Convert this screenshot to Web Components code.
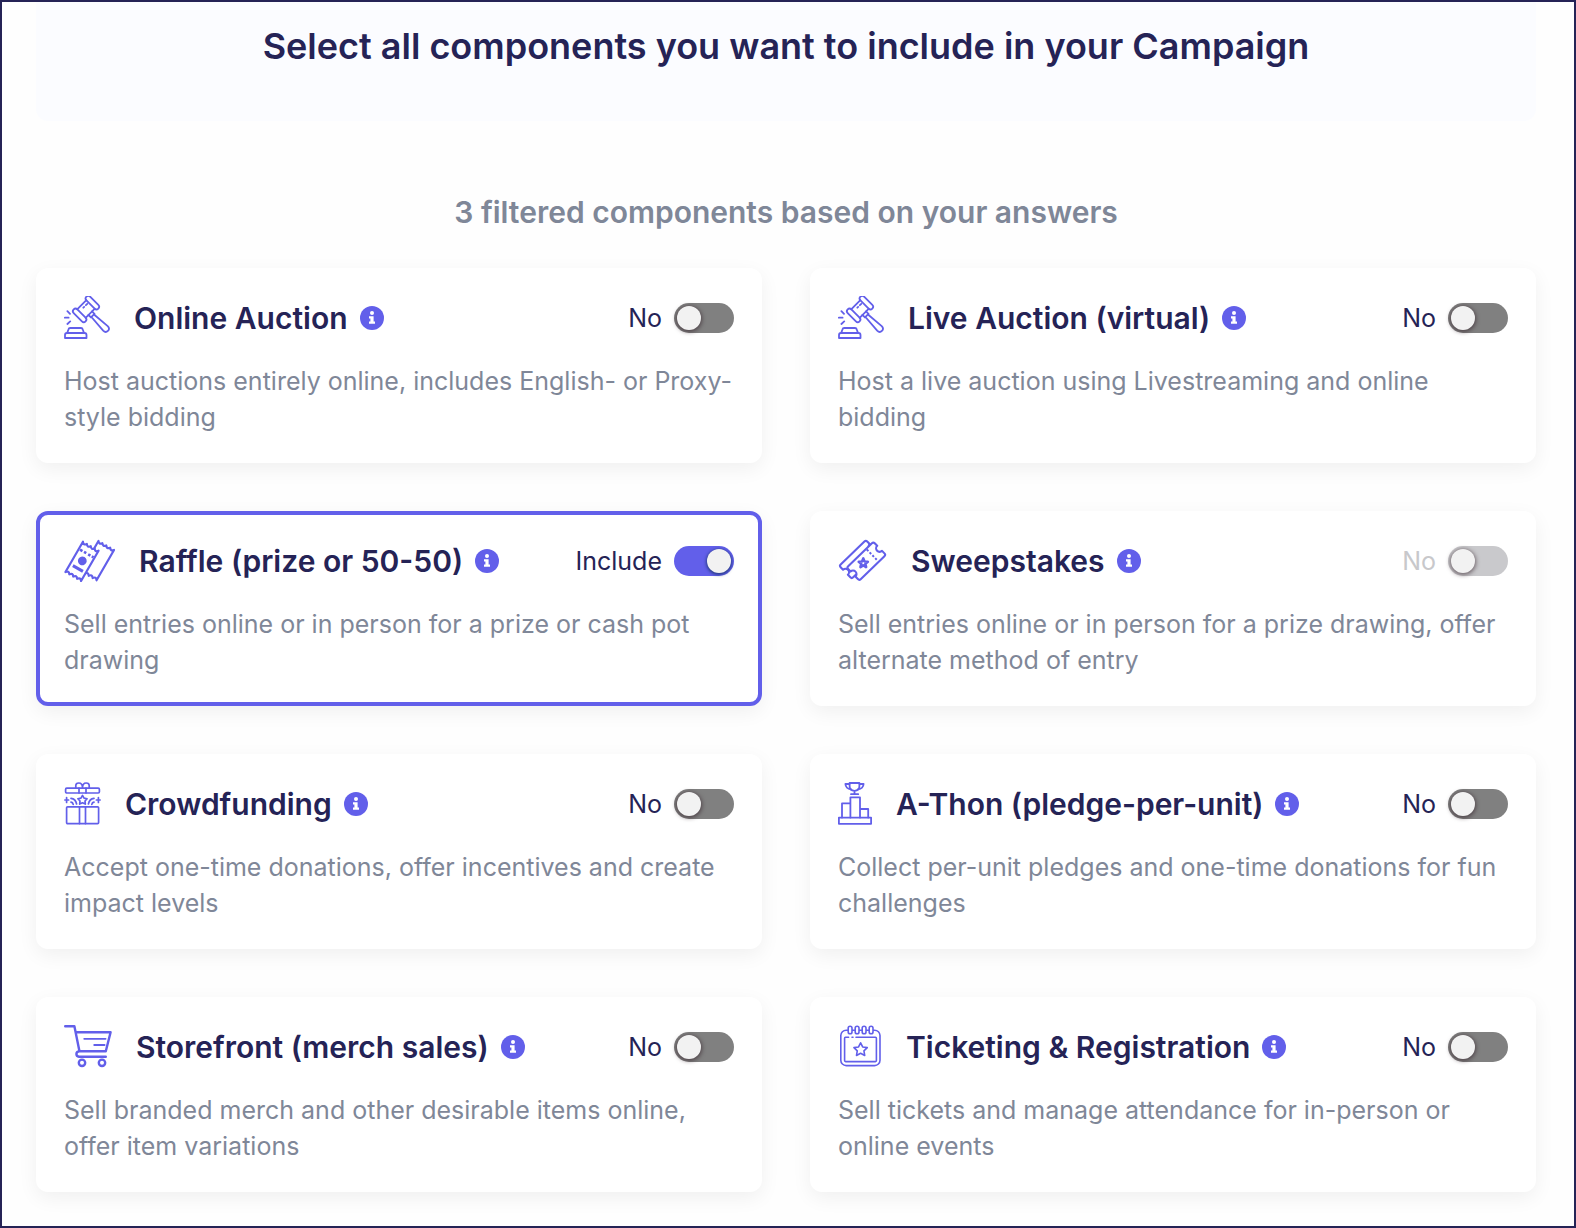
<!DOCTYPE html>
<html lang="en">
<head>
<meta charset="utf-8">
<title>Campaign components</title>
<style>
  :root {
    --ink: #252356;
    --muted: #7f8798;
    --accent: #625fea;
    --radius: 12px;
  }
  html, body { min-height: 100vh; box-sizing: border-box; }
  body {
    margin: 0;
    background: #fefefe;
    color: var(--ink);
    font-family: Inter, "Open Sans", sans-serif;
  }
</style>
</head>
<body>
<campaign-page>
  <span slot="title">Select all components you want to include in your Campaign</span>
  <span slot="summary">3 filtered components based on your answers</span>

  <component-card icon="gavel">
    <span slot="name">Online Auction</span>
    Host auctions entirely online, includes English- or Proxy-style bidding
  </component-card>
  <component-card icon="gavel">
    <span slot="name">Live Auction (virtual)</span>
    Host a live auction using Livestreaming and online bidding
  </component-card>
  <component-card icon="raffle" included>
    <span slot="name">Raffle (prize or 50-50)</span>
    Sell entries online or in person for a prize or cash pot drawing
  </component-card>
  <component-card icon="sweepstakes" disabled>
    <span slot="name">Sweepstakes</span>
    Sell entries online or in person for a prize drawing, offer alternate method of entry
  </component-card>
  <component-card icon="gift">
    <span slot="name">Crowdfunding</span>
    Accept one-time donations, offer incentives and create impact levels
  </component-card>
  <component-card icon="podium">
    <span slot="name">A-Thon (pledge-per-unit)</span>
    Collect per-unit pledges and one-time donations for fun challenges
  </component-card>
  <component-card icon="cart">
    <span slot="name">Storefront (merch sales)</span>
    Sell branded merch and other desirable items online, offer item variations
  </component-card>
  <component-card icon="calendar">
    <span slot="name">Ticketing &amp; Registration</span>
    Sell tickets and manage attendance for in-person or online events
  </component-card>
</campaign-page>

<script>
const star = (cx, cy, r, inner = 0.5) => {
  const pts = [];
  for (let i = 0; i < 10; i++) {
    const a = -Math.PI / 2 + i * Math.PI / 5;
    const d = i % 2 ? r * inner : r;
    pts.push((cx + d * Math.cos(a)).toFixed(2) + ',' + (cy + d * Math.sin(a)).toFixed(2));
  }
  return `<polygon points="${pts.join(' ')}"/>`;
};

const raffleTicket = 'M-9 -17.5q2.25 3.2 4.5 0q2.25 3.2 4.5 0q2.25 3.2 4.5 0q2.25 3.2 4.5 0V17.5q-2.25 -3.2 -4.5 0q-2.25 -3.2 -4.5 0q-2.25 -3.2 -4.5 0q-2.25 -3.2 -4.5 0Z';
const notchedTicket = 'M-16.5 -9H16.5Q18.5 -9 18.5 -7V-3.5A3.5 3.5 0 0 0 18.5 3.5V7Q18.5 9 16.5 9H-16.5Q-18.5 9 -18.5 7V3.5A3.5 3.5 0 0 0 -18.5 -3.5V-7Q-18.5 -9 -16.5 -9Z';

/* Each drawing is 43 units tall; the width differs per icon. */
const ICONS = {
  gavel: { w: 46, s: 1.8, d: `
    <path d="M3.4 36.6L4.4 33.4Q4.8 32 6.2 32H17Q18.4 32 18.8 33.4L19.8 36.6"/>
    <path d="M1 42V39Q1 37 3 37H20.5Q22.5 37 22.5 39V42Z"/>
    <path d="M3.4 15.2L6 17.8M.8 21.7H4.6M3.4 28L6.2 25.4"/>
    <g transform="translate(22 13) rotate(-45)">
      <path d="M-6.5 -6H6.5M-6.5 6H6.5"/>
      <rect x="-11.6" y="-8.4" width="5.2" height="16.8" rx="2.6"/>
      <rect x="6.4" y="-8.4" width="5.2" height="16.8" rx="2.6"/>
      <path d="M-1 -2.8H.2M2.6 -2.8H4.6"/>
      <path d="M-2.5 6V9.5H2.5V6M-1.8 9.5L-3.2 27.5Q-3.2 31 0 31Q3.2 31 3.2 27.5L1.8 9.5"/>
    </g>` },
  raffle: { w: 51, s: 2.2, d: `
    <path transform="translate(33.5 21.6) rotate(30)" d="${raffleTicket}"/>
    <g transform="translate(18 22.4) rotate(30)">
      <path fill="#fff" d="${raffleTicket}"/>
      <circle cx="0" cy="-.6" r="4.4" fill="currentColor" stroke="none"/>
      <path stroke-width="3" stroke-linecap="butt" d="M-5.8 8.2H5.8"/>
      <path stroke-width="2.6" stroke-linecap="butt" d="M-7.6 -9.2H-4.8M-3 -9.2H-.4M1.8 -9.2H4.4M6 -9.2H8"/>
    </g>` },
  sweepstakes: { w: 49, s: 2.1, d: `
    <path transform="translate(20.8 20.4) rotate(-44)" d="${notchedTicket}"/>
    <g transform="translate(28.3 22.2) rotate(-44)">
      <path fill="#fff" d="${notchedTicket}"/>
      <path stroke-width="2" stroke-linecap="butt" stroke-dasharray="2.2 1.8" d="M8.5 -8V8"/>
    </g>
    <g stroke-width="2.6">${star(25.3, 24.2, 4.8, 0.45)}</g>` },
  gift: { w: 37, s: 1.7, d: `
    <rect x="1.6" y="6.2" width="33.8" height="4.8" rx="1.2"/>
    <path d="M15 6.2V11M22 6.2V11M11.8 6.2V3.6Q11.8 1 14.8 1Q18.5 1 18.5 6Q18.5 1 22.2 1Q25.2 1 25.2 3.6V6.2"/>
    <rect x="2.6" y="24.8" width="32" height="16.8" rx="1"/>
    <path d="M15.5 24.8V41.6M21.5 24.8V41.6"/>
    ${star(18.5, 18.2, 4.8, 0.55)}
    <path d="M2.6 15.6V20.4M.8 18H4.6M34.4 15.6V20.4M32.4 18H36.2"/>
    <path d="M7 16.4Q11.6 16.8 12.6 22M7 20.2Q8.8 20.4 9.2 22.4M30 16.4Q25.4 16.8 24.4 22M30 20.2Q28.2 20.4 27.8 22.4"/>` },
  podium: { w: 34, s: 1.8, d: `
    <rect x=".9" y="35.6" width="32.2" height="6.2"/>
    <path d="M4 35.6V21.4H12.4M12.4 35.6V15.4H22V35.6M22 27H30.2V35.6"/>
    <path d="M11.6 1H21.4V4Q21.4 8.6 16.5 8.8Q11.6 8.6 11.6 4ZM16.5 8.8V12M13 12.2H20.2"/>
    <path d="M11.4 2H7.4Q7.8 6.8 13 7.4M21.6 2H25.6Q25.2 6.8 20 7.4"/>` },
  cart: { w: 48, s: 2.4, d: `
    <path d="M1.2 1.2H10.4L15.4 26M11.8 7.2H46.6L41.8 26.2H15.2Q12.4 26.6 12.4 29T15 31.8H41.8"/>
    <path stroke-width="1.8" d="M20.2 13.8H41.6M30.2 20H40.6"/>
    <circle cx="18" cy="37.8" r="3.2"/><circle cx="38" cy="37.8" r="3.2"/>` },
  calendar: { w: 44, s: 1.6, d: `
    <rect x="2.8" y="5.2" width="39.2" height="35.4" rx="5.4"/>
    <path d="M10.6 12.2H7.4Q6.6 12.2 6.6 13.2V35.6Q6.6 36.6 7.6 36.6H37.4Q38.4 36.6 38.4 35.6V13.2Q38.4 12.2 37.4 12.2H18M14 12.2H15"/>
    <g fill="#fff"><rect x="10.2" y="1.2" width="3.8" height="7.6" rx="1.9"/><rect x="17.2" y="1.2" width="3.8" height="7.6" rx="1.9"/><rect x="24.2" y="1.2" width="3.8" height="7.6" rx="1.9"/><rect x="31.2" y="1.2" width="3.8" height="7.6" rx="1.9"/></g>
    ${star(22.6, 24.8, 7, 0.5)}` }
};

class ComponentIcon extends HTMLElement {
  connectedCallback() {
    const icon = ICONS[this.getAttribute('name')];
    this.attachShadow({ mode: 'open' }).innerHTML = `
      <style>
        :host { display: block; flex: none; color: var(--accent); }
        svg { display: block; }
      </style>
      <svg width="${icon.w}" height="43" viewBox="0 0 ${icon.w} 43" fill="none" stroke="currentColor"
        stroke-width="${icon.s}" stroke-linecap="round" stroke-linejoin="round" aria-hidden="true">${icon.d}</svg>`;
  }
}
customElements.define('component-icon', ComponentIcon);

class InfoButton extends HTMLElement {
  connectedCallback() {
    this.attachShadow({ mode: 'open' }).innerHTML = `
      <style>
        :host { display: block; flex: none; }
        button { display: block; padding: 0; border: 0; background: none; color: var(--accent); cursor: pointer; }
        svg { display: block; }
      </style>
      <button type="button" aria-label="More information">
        <svg width="24" height="24" viewBox="0 0 24 24" aria-hidden="true">
          <circle cx="12" cy="12" r="12" fill="currentColor"/>
          <circle cx="12" cy="7" r="2" fill="#fff"/>
          <path fill="#fff" d="M9 10.2H13.6V15.6H15V17.8H9V15.6H10.4V12.4H9Z"/>
        </svg>
      </button>`;
  }
}
customElements.define('info-button', InfoButton);

class IncludeToggle extends HTMLElement {
  connectedCallback() {
    this.attachShadow({ mode: 'open' }).innerHTML = `
      <style>
        :host { display: flex; flex: none; align-items: center; gap: 12px; }
        label { font-size: 25px; line-height: 32px; }
        input {
          appearance: none; display: flex; box-sizing: border-box; margin: 0;
          width: 60px; height: 30px; padding: 3px; border-radius: 15px;
          background: #808080; cursor: pointer;
        }
        input::before {
          content: ""; width: 24px; height: 24px; border-radius: 50%;
          background: #f2f2f2; box-shadow: 0 1px 4px 1px rgba(40, 20, 30, .55);
        }
        input:checked { justify-content: flex-end; background: var(--accent); }
        input:checked::before { box-shadow: 0 1px 3px 1px rgba(20, 50, 100, .7); }
        :host([disabled]) label { color: #c8c8cb; }
        input:disabled { background: #c9c9cc; cursor: default; }
      </style>
      <label for="toggle"></label>
      <input id="toggle" type="checkbox" role="switch">`;
    const input = this.shadowRoot.querySelector('input');
    const label = this.shadowRoot.querySelector('label');
    input.checked = this.hasAttribute('checked');
    input.disabled = this.hasAttribute('disabled');
    const sync = () => { label.textContent = input.checked ? 'Include' : 'No'; };
    input.addEventListener('change', () => {
      sync();
      this.dispatchEvent(new CustomEvent('toggle-change', { detail: input.checked }));
    });
    sync();
  }
}
customElements.define('include-toggle', IncludeToggle);

class ComponentCard extends HTMLElement {
  connectedCallback() {
    this.attachShadow({ mode: 'open' }).innerHTML = `
      <style>
        :host {
          display: flex; flex-direction: column; gap: 24px; box-sizing: border-box; min-width: 0;
          padding: 24px; border: 4px solid transparent; border-radius: var(--radius);
          background: #fff; background-clip: border-box;
          box-shadow: 0 6px 20px rgba(0, 0, 0, .06);
        }
        :host([included]) { border-color: var(--accent); }
        header { display: flex; align-items: center; }
        h3 { margin: 0 12px 0 24px; font-size: 30px; line-height: 36px; font-weight: 600; white-space: nowrap; }
        include-toggle { margin-left: auto; }
        p { margin: 0; color: var(--muted); font-size: 25px; line-height: 36px; }
      </style>
      <header>
        <component-icon name="${this.getAttribute('icon')}"></component-icon>
        <h3><slot name="name"></slot></h3>
        <info-button></info-button>
        <include-toggle ${this.hasAttribute('included') ? 'checked' : ''} ${this.hasAttribute('disabled') ? 'disabled' : ''}></include-toggle>
      </header>
      <p><slot></slot></p>`;
    this.shadowRoot.querySelector('include-toggle')
      .addEventListener('toggle-change', e => this.toggleAttribute('included', e.detail));
  }
}
customElements.define('component-card', ComponentCard);

class CampaignPage extends HTMLElement {
  connectedCallback() {
    this.attachShadow({ mode: 'open' }).innerHTML = `
      <style>
        :host {
          display: block; box-sizing: border-box; min-height: 100vh;
          border: 2px solid var(--ink); padding: 0 38px 34px 34px;
        }
        .hero {
          padding: 22px 24px 53px; text-align: center;
          background: #fbfcff; border-radius: 0 0 var(--radius) var(--radius);
        }
        h1 { margin: 0; font-size: 36px; line-height: 44px; font-weight: 600; }
        h2 { margin: 73px 0 38px; text-align: center; color: var(--muted); font-size: 30px; line-height: 36px; font-weight: 600; }
        .grid { display: grid; grid-template-columns: repeat(2, minmax(0, 1fr)); gap: 48px; }
      </style>
      <div class="hero"><h1><slot name="title"></slot></h1></div>
      <main>
        <h2><slot name="summary"></slot></h2>
        <div class="grid"><slot></slot></div>
      </main>`;
  }
}
customElements.define('campaign-page', CampaignPage);
</script>
</body>
</html>
